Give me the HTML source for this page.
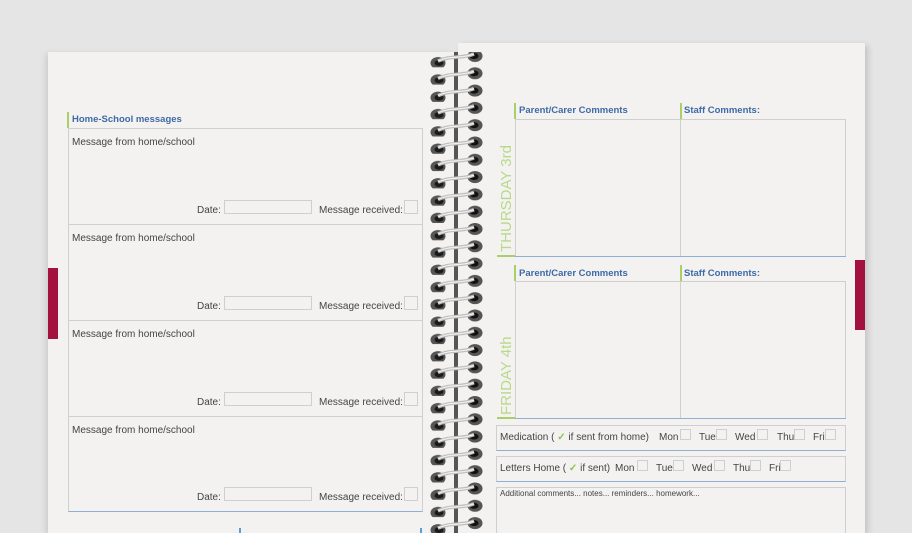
<!DOCTYPE html>
<html><head><style>
*{margin:0;padding:0;box-sizing:border-box}
html,body{width:912px;height:533px;overflow:hidden}
body{background:#e5e5e5;font-family:"Liberation Sans",sans-serif;position:relative}
.a{position:absolute}
.t{font-size:10px;color:#444;position:absolute;white-space:nowrap}
.h{font-size:9.5px;font-weight:bold;color:#3e6aa6;position:absolute;white-space:nowrap}
.g{position:absolute;background:#a9cf6a;width:2px}
.bx{position:absolute;border:1px solid #cfcfcf}
.ck{color:#8cc34a;font-weight:bold}
.vt{position:absolute;color:#b9d98a;font-size:15px;white-space:nowrap;transform:rotate(-90deg);transform-origin:left top}
</style></head><body>
<div class="a" style="left:48px;top:52px;width:407px;height:481px;background:#f3f2f1;box-shadow:-2px 2px 6px rgba(0,0,0,.12)"></div>
<div class="a" style="left:48px;top:268px;width:10px;height:71px;background:#a3123f"></div>
<div class="a" style="left:458px;top:43px;width:407px;height:490px;background:#f3f2f1;box-shadow:3px 2px 6px rgba(0,0,0,.15)"></div>
<div class="a" style="left:855px;top:260px;width:10px;height:70px;background:#a3123f"></div>
<div class="a" style="left:454px;top:52px;width:4px;height:481px;background:#555"></div>

<div class="g" style="left:67px;top:112px;height:16px"></div>
<div class="h" style="left:72px;top:114px">Home-School messages</div>
<div class="a" style="left:68px;top:128px;width:355px;height:384px;border:1px solid #cfcfcf;border-bottom:1px solid #8fb0d4"></div>
<div class="a" style="left:68px;top:224px;width:355px;height:1px;background:#cfcfcf"></div>
<div class="a" style="left:68px;top:320px;width:355px;height:1px;background:#cfcfcf"></div>
<div class="a" style="left:68px;top:416px;width:355px;height:1px;background:#cfcfcf"></div>
<div class="t" style="left:72px;top:137px">Message from home/school</div>
<div class="t" style="left:72px;top:233px">Message from home/school</div>
<div class="t" style="left:72px;top:329px">Message from home/school</div>
<div class="t" style="left:72px;top:425px">Message from home/school</div>
<div class="t" style="left:197px;top:205px">Date:</div><div class="bx" style="left:224px;top:200px;width:88px;height:14px"></div>
<div class="t" style="left:319px;top:205px">Message received:</div><div class="bx" style="left:404px;top:200px;width:14px;height:14px"></div>
<div class="t" style="left:197px;top:301px">Date:</div><div class="bx" style="left:224px;top:296px;width:88px;height:14px"></div>
<div class="t" style="left:319px;top:301px">Message received:</div><div class="bx" style="left:404px;top:296px;width:14px;height:14px"></div>
<div class="t" style="left:197px;top:397px">Date:</div><div class="bx" style="left:224px;top:392px;width:88px;height:14px"></div>
<div class="t" style="left:319px;top:397px">Message received:</div><div class="bx" style="left:404px;top:392px;width:14px;height:14px"></div>
<div class="t" style="left:197px;top:492px">Date:</div><div class="bx" style="left:224px;top:487px;width:88px;height:14px"></div>
<div class="t" style="left:319px;top:492px">Message received:</div><div class="bx" style="left:404px;top:487px;width:14px;height:14px"></div>
<div class="a" style="left:239px;top:528px;width:2px;height:5px;background:#5aa0d8"></div>
<div class="a" style="left:420px;top:528px;width:2px;height:5px;background:#5aa0d8"></div>

<div class="g" style="left:514px;top:103px;height:16px"></div><div class="h" style="left:519px;top:105px">Parent/Carer Comments</div>
<div class="g" style="left:680px;top:103px;height:16px"></div><div class="h" style="left:684px;top:105px">Staff Comments:</div>
<div class="a" style="left:515px;top:119px;width:331px;height:138px;border:1px solid #cfcfcf;border-bottom:none"></div>
<div class="a" style="left:680px;top:119px;width:1px;height:137px;background:#cfcfcf"></div>
<div class="a" style="left:497px;top:256px;width:349px;height:1px;background:#8fb0d4"></div>
<div class="a" style="left:497px;top:255px;width:18px;height:2px;background:#a9cf6a"></div>
<div class="vt" style="left:498px;top:252px">THURSDAY 3rd</div>
<div class="g" style="left:514px;top:265px;height:16px"></div><div class="h" style="left:519px;top:268px">Parent/Carer Comments</div>
<div class="g" style="left:680px;top:265px;height:16px"></div><div class="h" style="left:684px;top:268px">Staff Comments:</div>
<div class="a" style="left:515px;top:281px;width:331px;height:138px;border:1px solid #cfcfcf;border-bottom:none"></div>
<div class="a" style="left:680px;top:281px;width:1px;height:137px;background:#cfcfcf"></div>
<div class="a" style="left:497px;top:418px;width:349px;height:1px;background:#8fb0d4"></div>
<div class="a" style="left:497px;top:417px;width:18px;height:2px;background:#a9cf6a"></div>
<div class="vt" style="left:498px;top:415px">FRIDAY 4th</div>
<div class="a" style="left:496px;top:425px;width:350px;height:26px;border:1px solid #cfcfcf;border-bottom:1px solid #8fb0d4"></div>
<div class="t" style="left:500px;top:432px">Medication ( <span class="ck">✓</span> if sent from home)</div>
<div class="t" style="left:659px;top:432px">Mon</div><div class="bx" style="left:680px;top:429px;width:11px;height:11px"></div>
<div class="t" style="left:699px;top:432px">Tue</div><div class="bx" style="left:716px;top:429px;width:11px;height:11px"></div>
<div class="t" style="left:735px;top:432px">Wed</div><div class="bx" style="left:757px;top:429px;width:11px;height:11px"></div>
<div class="t" style="left:777px;top:432px">Thu</div><div class="bx" style="left:794px;top:429px;width:11px;height:11px"></div>
<div class="t" style="left:813px;top:432px">Fri</div><div class="bx" style="left:825px;top:429px;width:11px;height:11px"></div>
<div class="a" style="left:496px;top:456px;width:350px;height:26px;border:1px solid #cfcfcf;border-bottom:1px solid #8fb0d4"></div>
<div class="t" style="left:500px;top:463px">Letters Home ( <span class="ck">✓</span> if sent)</div>
<div class="t" style="left:615px;top:463px">Mon</div><div class="bx" style="left:637px;top:460px;width:11px;height:11px"></div>
<div class="t" style="left:656px;top:463px">Tue</div><div class="bx" style="left:673px;top:460px;width:11px;height:11px"></div>
<div class="t" style="left:692px;top:463px">Wed</div><div class="bx" style="left:714px;top:460px;width:11px;height:11px"></div>
<div class="t" style="left:733px;top:463px">Thu</div><div class="bx" style="left:750px;top:460px;width:11px;height:11px"></div>
<div class="t" style="left:769px;top:463px">Fri</div><div class="bx" style="left:780px;top:460px;width:11px;height:11px"></div>
<div class="a" style="left:496px;top:487px;width:350px;height:60px;border:1px solid #cfcfcf"></div>
<div class="t" style="left:500px;top:489px;font-size:8px">Additional comments... notes... reminders... homework...</div>

<svg class="a" style="left:426px;top:50px" width="62" height="483" viewBox="0 0 62 483">
<defs>
<pattern id="sp" x="0" y="0" width="62" height="17.3" patternUnits="userSpaceOnUse">
<ellipse cx="12" cy="13" rx="7.5" ry="6" fill="#555"/>
<ellipse cx="13" cy="13" rx="4.5" ry="3" fill="#1a1a1a"/>
<ellipse cx="49" cy="6" rx="7.5" ry="6" fill="#555"/>
<ellipse cx="48" cy="6" rx="4.5" ry="3" fill="#111"/>
<path d="M12 11 C25 5,35 9,48 4" stroke="#bbb" stroke-width="3.5" fill="none"/>
<path d="M12 11 C25 5,35 9,48 4" stroke="#f5f5f5" stroke-width="1.2" fill="none"/>
</pattern>
</defs>
<rect x="0" y="2" width="62" height="481" fill="url(#sp)"/>
</svg>
</body></html>
